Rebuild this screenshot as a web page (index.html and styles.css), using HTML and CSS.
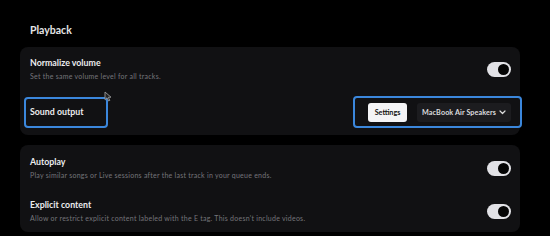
FILE: index.html
```html
<!DOCTYPE html>
<html>
<head>
<meta charset="utf-8">
<link rel="stylesheet" href="styles.css">
</head>
<body>
<div class="page">
  <h2 class="section-title">Playback</h2>
  <div class="card card-first">
    <div class="row">
      <div class="text">
        <div class="title">Normalize volume</div>
        <div class="sub">Set the same volume level for all tracks.</div>
      </div>
      <div class="toggle"><span class="knob"></span></div>
    </div>
    <div class="row row-output">
      <div class="highlight label-box"><span class="title">Sound output</span></div>
      <div class="highlight controls">
        <button class="btn btn-light">Settings</button>
        <button class="btn btn-dark"><span>MacBook Air Speakers</span>
          <svg class="chev" width="7" height="5" viewBox="0 0 7 5"><path d="M1 1 L3.5 3.5 L6 1" fill="none" stroke="#ddd" stroke-width="1.2" stroke-linecap="round" stroke-linejoin="round"/></svg>
        </button>
      </div>
    </div>
    <svg class="cursor" width="9" height="11" viewBox="0 0 9 11"><path d="M1 1 L1 8.5 L3 6.8 L4.6 10 L5.8 9.4 L4.3 6.3 L7 6.2 Z" fill="#222" stroke="#9a9a9a" stroke-width="0.9" stroke-linejoin="round"/></svg>
  </div>
  <div class="card card-second">
    <div class="row">
      <div class="text">
        <div class="title">Autoplay</div>
        <div class="sub">Play similar songs or Live sessions after the last track in your queue ends.</div>
      </div>
      <div class="toggle"><span class="knob"></span></div>
    </div>
    <div class="row row-gap">
      <div class="text">
        <div class="title">Explicit content</div>
        <div class="sub">Allow or restrict explicit content labeled with the E tag. This doesn't include videos.</div>
      </div>
      <div class="toggle"><span class="knob"></span></div>
    </div>
  </div>
</div>
</body>
</html>
```
FILE: styles.css
```css
* { box-sizing: border-box; }
html, body { margin: 0; padding: 0; background: #000; }
body {
  width: 550px;
  height: 236px;
  overflow: hidden;
  font-family: "Lato", "Inter", sans-serif;
  color: #e8e8ea;
}
.page {
  padding: 23px 0 0 20px;
  width: 520px;
}
.section-title {
  margin: 0 0 10px 10px;
  font-size: 10.5px;
  line-height: 14px;
  font-weight: 700;
  color: #e4e4e6;
}
.card {
  position: relative;
  background: #111113;
  border-radius: 8px;
  width: 500px;
  padding: 10px 9px 7px 10px;
}
.card-second {
  margin-top: 10px;
  padding-top: 11px;
  padding-bottom: 9px;
}
.row {
  display: flex;
  align-items: center;
  justify-content: space-between;
}
.row-gap { margin-top: 19px; }
.text { display: flex; flex-direction: column; gap: 2px; }
.title {
  font-size: 8.8px;
  line-height: 12px;
  font-weight: 700;
  color: #ececee;
  white-space: nowrap;
}
.sub {
  font-size: 7px;
  line-height: 10px;
  letter-spacing: 0.25px;
  color: #75757a;
  white-space: nowrap;
}
.toggle {
  width: 24px;
  height: 15px;
  border-radius: 8px;
  background: #e2e2e6;
  display: flex;
  align-items: center;
  justify-content: flex-end;
  padding-right: 2px;
}
.knob {
  width: 11px;
  height: 11px;
  border-radius: 50%;
  background: #050505;
}
.row-output {
  margin-top: 15px;
  align-items: center;
}
.highlight {
  border: 2px solid #3b87dc;
  border-radius: 4px;
}
.label-box {
  margin-left: -6px;
  width: 84px;
  height: 31px;
  display: flex;
  align-items: center;
  padding-left: 4px;
}
.controls {
  margin-right: -11px;
  height: 32px;
  display: flex;
  align-items: center;
  gap: 10px;
  padding: 0 9px 0 13px;
}
.btn {
  font-family: inherit;
  font-size: 7.2px;
  font-weight: 700;
  height: 19px;
  border: none;
  border-radius: 3px;
  display: flex;
  align-items: center;
  white-space: nowrap;
  padding: 0;
}
.btn-light {
  background: #f4f4f6;
  color: #111;
  width: 39px;
  justify-content: center;
}
.btn-dark {
  background: #1c1c1f;
  color: #dcdcdf;
  width: 94px;
  gap: 3px;
  justify-content: center;
  letter-spacing: 0.1px;
}
.chev { display: block; }
.cursor {
  position: absolute;
  left: 84px;
  top: 44px;
}
```
